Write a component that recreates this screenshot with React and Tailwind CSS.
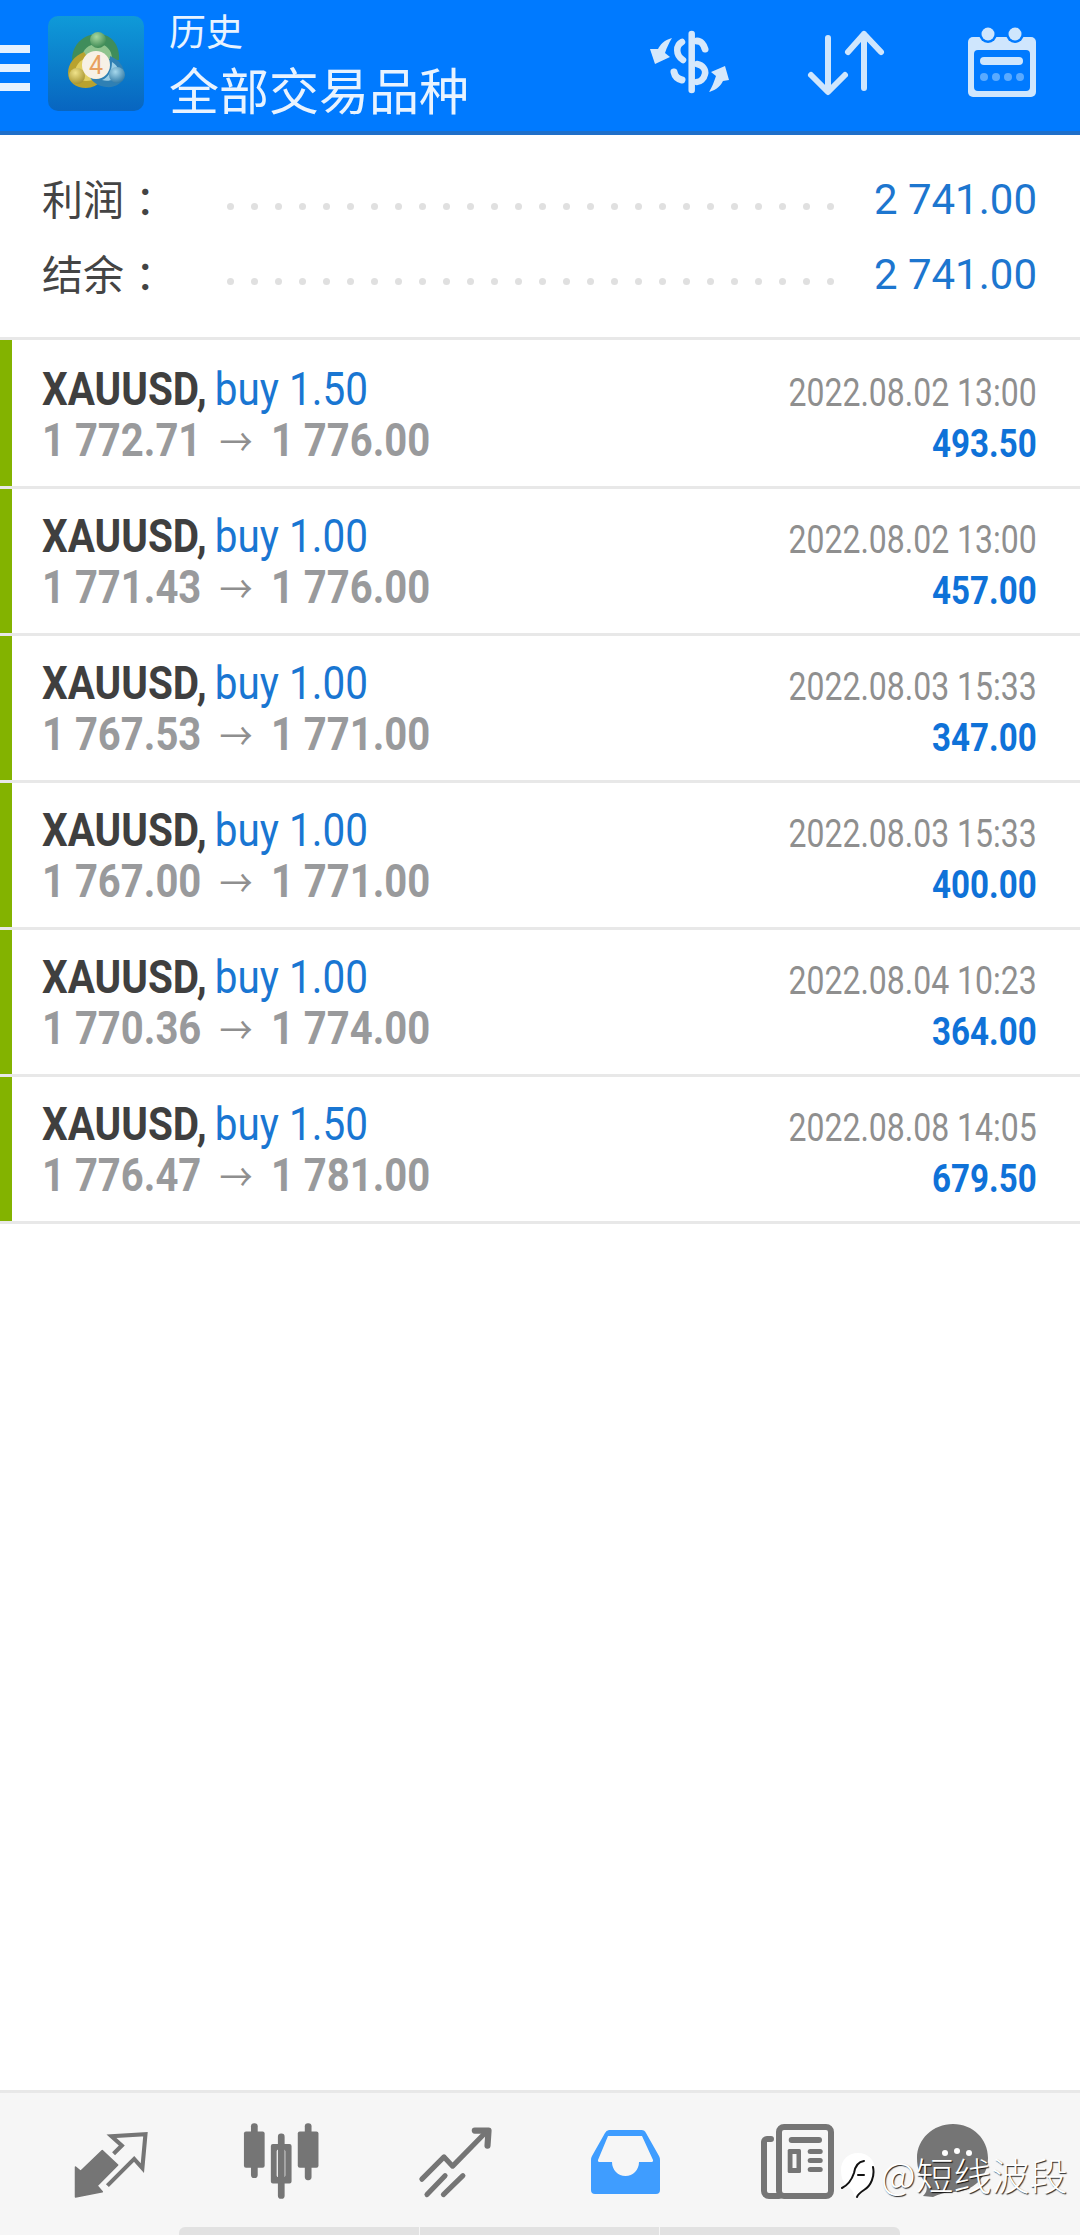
import React from "react"

const trades = [
  { lots: "1.50", open: "1 772.71", close: "1 776.00", time: "2022.08.02 13:00", profit: "493.50" },
  { lots: "1.00", open: "1 771.43", close: "1 776.00", time: "2022.08.02 13:00", profit: "457.00" },
  { lots: "1.00", open: "1 767.53", close: "1 771.00", time: "2022.08.03 15:33", profit: "347.00" },
  { lots: "1.00", open: "1 767.00", close: "1 771.00", time: "2022.08.03 15:33", profit: "400.00" },
  { lots: "1.00", open: "1 770.36", close: "1 774.00", time: "2022.08.04 10:23", profit: "364.00" },
  { lots: "1.50", open: "1 776.47", close: "1 781.00", time: "2022.08.08 14:05", profit: "679.50" },
]

const summary = [
  { label: "利润", value: "2 741.00" },
  { label: "结余", value: "2 741.00" },
]

const dots = Array.from({ length: 26 }, (_, i) => i)

const Mt4Logo = () => (
  <svg width="96" height="95" viewBox="0 0 96 95" className="shrink-0">
    <defs>
      <linearGradient id="logoBg" x1="0" y1="0" x2="0" y2="1">
        <stop offset="0" stopColor="#0f9ad8" />
        <stop offset="1" stopColor="#0865c0" />
      </linearGradient>
      <radialGradient id="greenHead" cx="0.4" cy="0.3" r="0.8">
        <stop offset="0" stopColor="#a8d8a0" />
        <stop offset="1" stopColor="#2f7f4a" />
      </radialGradient>
      <radialGradient id="yellowHead" cx="0.4" cy="0.3" r="0.8">
        <stop offset="0" stopColor="#f0e38a" />
        <stop offset="1" stopColor="#a08c28" />
      </radialGradient>
      <radialGradient id="blueHead" cx="0.4" cy="0.3" r="0.8">
        <stop offset="0" stopColor="#a6d8ec" />
        <stop offset="1" stopColor="#25709e" />
      </radialGradient>
    </defs>
    <rect width="96" height="95" rx="10" fill="url(#logoBg)" />
    <path d="M24 44C24 28 36 18 50 18C64 18 72 30 71 44Z" fill="#3f8d5b" />
    <path d="M34 43C34 33 41 28 50 28C58 28 64 34 64 43Z" fill="#8fc48e" />
    <path d="M36 36C26 40 20 48 20 57C20 66 28 72 38 72C44 72 50 69 54 64Z" fill="#b8a22f" />
    <path d="M36 43C30 46 27 51 27 57C27 62 32 65 38 65C42 65 46 64 48 61Z" fill="#e2cf62" />
    <path d="M62 40C72 44 76 51 76 58C76 67 67 72 58 71C50 70 44 66 42 61C50 66 60 62 62 40Z" fill="#2f80b4" />
    <path d="M64 46C69 49 71 53 70 58C68 64 60 66 54 64C60 62 64 55 64 46Z" fill="#9bcde4" />
    <circle cx="50" cy="24" r="8" fill="url(#greenHead)" />
    <circle cx="29" cy="60" r="8" fill="url(#yellowHead)" />
    <circle cx="69" cy="59" r="8" fill="url(#blueHead)" />
    <circle cx="48" cy="49" r="14" fill="#f7f1e6" />
    <text x="48" y="58" textAnchor="middle" fontSize="25" fontFamily="Roboto" fill="#e8a060">4</text>
  </svg>
)

const DollarIcon = () => (
  <svg width="100" height="80" viewBox="0 0 100 80" fill="none" stroke="#d6e8fb" strokeLinecap="round" className="shrink-0">
    <path d="M51.7 14V70" strokeWidth="6.5" />
    <path d="M57 21C61 21 64 25 65 29" strokeWidth="7" />
    <path d="M42 22C36 25 35 35 43 40" strokeWidth="6.5" />
    <path d="M34 52C35 57 38 59 42 60" strokeWidth="7" />
    <path d="M57 44C63 45 66 50 65 54C64 59 60 62 57 62" strokeWidth="6.5" />
    <path d="M32 18C24 20 20 25 18 29L10 29L15 44L30 37L25 33C27 27 29 23 32 18Z" fill="#d6e8fb" stroke="none" />
    <path d="M69 72C77 70 81 65 83 61L89 60L85 46L71 52L76 56C74 62 72 67 69 72Z" fill="#d6e8fb" stroke="none" />
  </svg>
)

const SortIcon = () => (
  <svg width="82" height="80" viewBox="0 0 82 80" fill="none" stroke="#cfe6fd" strokeWidth="6" strokeLinecap="round" strokeLinejoin="round" className="shrink-0">
    <path d="M23 18V71M6 55L23 72L40 55" />
    <path d="M59 14V68M43 32L59 14L76 32" />
  </svg>
)

const CalendarIcon = () => (
  <svg width="84" height="80" viewBox="0 0 84 80" className="shrink-0">
    <rect x="8" y="17" width="68" height="60" rx="5" fill="#cfe6fd" />
    <circle cx="28" cy="14" r="9" fill="#007aff" />
    <circle cx="55" cy="14" r="9" fill="#007aff" />
    <circle cx="28" cy="14" r="6.5" fill="#cfe6fd" />
    <circle cx="55" cy="14" r="6.5" fill="#cfe6fd" />
    <rect x="14" y="30" width="56" height="41" rx="4" fill="#007aff" />
    <rect x="20" y="37" width="43" height="8" rx="4" fill="#cfe6fd" />
    <circle cx="24" cy="57" r="4" fill="#5aaaff" />
    <circle cx="36" cy="57" r="4" fill="#5aaaff" />
    <circle cx="48" cy="57" r="4" fill="#5aaaff" />
    <circle cx="60" cy="57" r="4" fill="#5aaaff" />
  </svg>
)

const TradeIcon = () => (
  <svg width="76" height="72" viewBox="0 0 73 70" className="shrink-0">
    <path d="M2 39L7 43L28 23L43 37L23 57L28 63L2 68Z" fill="#757575" stroke="#757575" strokeWidth="1.5" strokeLinejoin="round" />
    <path d="M33 57L59 31L67 40L70 7L37 9L47 18L39 26" fill="none" stroke="#757575" strokeWidth="4" />
  </svg>
)

const ChartIcon = () => (
  <svg width="88" height="86" viewBox="0 0 85 83" fill="#757575" className="shrink-0">
    <rect x="13.5" y="5" width="6.5" height="53" rx="3" />
    <rect x="6.7" y="13" width="20" height="35" rx="2" />
    <rect x="39.5" y="15" width="6.5" height="63" rx="3" />
    <path fillRule="evenodd" d="M34.7 25H50.7A2 2 0 0 1 52.7 27V61.3A2 2 0 0 1 50.7 63.3H34.7A2 2 0 0 1 32.7 61.3V27A2 2 0 0 1 34.7 25ZM40 30.5A1.7 1.7 0 0 0 38.3 32.2V55.6A1.7 1.7 0 0 0 40 57.3H45A1.7 1.7 0 0 0 46.7 55.6V32.2A1.7 1.7 0 0 0 45 30.5Z" />
    <rect x="65.5" y="5" width="6.5" height="55" rx="3" />
    <rect x="58.7" y="13" width="20" height="35" rx="2" />
  </svg>
)

const TrendIcon = () => (
  <svg width="80" height="78" viewBox="0 0 78 76" fill="none" stroke="#757575" strokeWidth="5" strokeLinecap="round" strokeLinejoin="round" className="shrink-0">
    <path d="M6.7 56.7L28.3 35L36.7 44L70 10" />
    <path d="M58.3 9.3H71.7L70.7 24" strokeWidth="6" />
    <path d="M11.7 71.7L29.3 53.3M27.7 71.7L46.7 53.3" />
  </svg>
)

const InboxIcon = () => (
  <svg width="76" height="66" viewBox="0 0 76 66" className="shrink-0">
    <path d="M22 1H54A5 5 0 0 1 59 4L72 27A7 7 0 0 1 73 31V61A4 4 0 0 1 69 65H8A4 4 0 0 1 4 61V31A7 7 0 0 1 5 27L18 4A5 5 0 0 1 22 1Z" fill="#3f9dff" />
    <path d="M21 7H55L66 31A1.5 1.5 0 0 1 65 33H52C52 41 46 47 38.5 47C31 47 25 41 25 33H12A1.5 1.5 0 0 1 11 31Z" fill="#f6f6f6" />
  </svg>
)

const NewsIcon = () => (
  <svg width="80" height="78" viewBox="0 0 78 78" fill="none" className="shrink-0">
    <rect x="23" y="5" width="52" height="69" rx="5" stroke="#757575" strokeWidth="6" />
    <path d="M15 17H11A3 3 0 0 0 8 20V69A5 5 0 0 0 13 74H23" stroke="#757575" strokeWidth="6" strokeLinecap="round" />
    <rect x="32.7" y="15" width="33.3" height="6" rx="3" fill="#757575" />
    <rect x="31.7" y="27" width="13.3" height="24" rx="1.5" fill="#757575" />
    <rect x="36.5" y="32" width="4" height="14" fill="#f6f6f6" />
    <rect x="51.7" y="27" width="15" height="5" rx="2.5" fill="#757575" />
    <rect x="51.7" y="36" width="15" height="5" rx="2.5" fill="#757575" />
    <rect x="51.7" y="45" width="15" height="5" rx="2.5" fill="#757575" />
  </svg>
)

const ChatIcon = () => (
  <svg width="75" height="76" viewBox="0 0 75 76" className="shrink-0">
    <path d="M38 2C58 2 73 17 73 36C73 55 58 70 38 70C30 70 24 72 18 75L8 74C12 70 13 66 10 60C5 54 2 46 2 36C2 17 18 2 38 2Z" fill="#757575" />
    <circle cx="30" cy="31" r="3" fill="#fff" />
    <circle cx="42" cy="29" r="3" fill="#fff" />
    <circle cx="54" cy="31" r="3" fill="#fff" />
  </svg>
)

const Watermark = () => (
  <div className="absolute left-[840px] top-[2152px] flex items-start font-['Noto_Sans_CJK_SC',sans-serif] text-[38px] leading-[44px] font-light text-white [text-shadow:1px_1px_1px_rgba(0,0,0,0.85)]">
    <svg width="36" height="46" viewBox="0 0 36 46" className="shrink-0">
      <path d="M18 1C28 1 35 8 35 18C35 28 29 36 20 40L14 45C14 40 12 37 8 35C3 31 1 25 1 18C1 8 8 1 18 1Z" fill="#fff" />
      <path d="M2 36C8 33 12 27 14 21C15 15 17 10 24 9M18 23H24M33 15C35 24 31 34 24 38C21 40 18 42 17 45" fill="none" stroke="#111" strokeWidth="2" strokeLinecap="round" />
    </svg>
    <span className="ml-[5px]">@短线波段</span>
  </div>
)

export default function App() {
  return (
    <div className="relative w-[1080px] min-h-[2235px] flex flex-col bg-white font-['Roboto','Noto_Sans_CJK_SC',sans-serif] overflow-hidden">
      {/* top bar */}
      <header className="h-[135px] flex bg-[#007aff] border-b-[4px] border-[#1f6fc9]">
        <div className="w-[30px] mt-[45px] flex flex-col gap-[11px] shrink-0">
          <div className="h-[8px] bg-[#e6f2ff]" />
          <div className="h-[8px] bg-[#e6f2ff]" />
          <div className="h-[8px] bg-[#e6f2ff]" />
        </div>
        <div className="ml-[18px] mt-[16px]">
          <Mt4Logo />
        </div>
        <div className="ml-[25px] mt-[8px] text-[#e8f3ff] font-['Noto_Sans_CJK_SC',sans-serif]">
          <div className="text-[37px] leading-[44px]">历史</div>
          <div className="mt-[3px] text-[50px] leading-[66px]">全部交易品种</div>
        </div>
        <div className="ml-auto mr-[36px] mt-[20px] flex items-start">
          <DollarIcon />
          <div className="ml-[65px]"><SortIcon /></div>
          <div className="ml-[73px]"><CalendarIcon /></div>
        </div>
      </header>

      {/* totals */}
      <section className="pt-[27px] pb-[25px] pl-[42px] pr-[43px] border-b-[3px] border-[#e8e8e8]">
        {summary.map((row) => (
          <div key={row.label} className="h-[75px] flex">
            <div className="w-[185px] -mt-[2px] shrink-0 flex text-[41px] leading-[75px] text-[#444] font-['Noto_Sans_CJK_SC',sans-serif]">
              {row.label}
              <span className="ml-[11px]">：</span>
            </div>
            <div className="w-[607px] h-[7px] mt-[41px] flex justify-between">
              {dots.map((d) => (
                <span key={d} className="w-[7px] h-[7px] rounded-full bg-[#e0e0e0]" />
              ))}
            </div>
            <div className="ml-auto text-[42px] leading-[75px] text-[#1d76cf]">{row.value}</div>
          </div>
        ))}
      </section>

      {/* closed positions */}
      <main className="flex-1">
        {trades.map((t, i) => (
          <div key={i} className={i === 0 ? "h-[149px] flex border-b-[3px] border-[#e8e8e8]" : "h-[147px] flex border-b-[3px] border-[#e8e8e8]"}>
            <div className="w-[12px] h-full shrink-0 bg-[#83b300]" />
            <div className={i === 0 ? "flex-1 pt-[2px] pl-[30px] pr-[43px] flex justify-between" : "flex-1 pl-[30px] pr-[43px] flex justify-between"}>
              <div className="pt-[22px] text-[46px] leading-[50px] whitespace-nowrap">
                <div className="origin-left scale-x-[0.88]">
                  <span className="font-bold text-[#3f3f3f]">XAUUSD,</span>
                  <span className="ml-[9px] text-[#1976d2]">buy {t.lots}</span>
                </div>
                <div className="mt-[1px] origin-left scale-x-[0.87] font-bold text-[#999a9c]">
                  {t.open}
                  <span className="mx-[21px] font-normal text-[38px] text-[#8f8f8f]">→</span>
                  {t.close}
                </div>
              </div>
              <div className="pt-[28px] text-right whitespace-nowrap">
                <div className="origin-right scale-x-[0.82] text-[39px] leading-[46px] text-[#8f8f8f]">{t.time}</div>
                <div className="mt-[5px] origin-right scale-x-[0.85] text-[39px] leading-[46px] font-bold text-[#0f72d8]">{t.profit}</div>
              </div>
            </div>
          </div>
        ))}
      </main>

      {/* bottom tabs */}
      <nav className="h-[145px] flex flex-col bg-[#f6f6f6] border-t-[3px] border-[#e8e8e8]">
        <div className="flex-1 flex items-start pt-[34px] pl-[73px]">
          <TradeIcon />
          <div className="ml-[88px] -mt-[9px]"><ChartIcon /></div>
          <div className="ml-[90px] -mt-[6px]"><TrendIcon /></div>
          <div className="ml-[92px] mt-[2px]"><InboxIcon /></div>
          <div className="ml-[92px] -mt-[5px]"><NewsIcon /></div>
          <div className="ml-[80px] -mt-[5px]"><ChatIcon /></div>
        </div>
        <div className="h-[8px] ml-[179px] w-[721px] flex gap-[1px]">
          <div className="flex-1 bg-[#e2e2e2] rounded-tl-[6px]" />
          <div className="flex-1 bg-[#e2e2e2]" />
          <div className="flex-1 bg-[#e2e2e2] rounded-tr-[6px]" />
        </div>
      </nav>

      <Watermark />
    </div>
  )
}
